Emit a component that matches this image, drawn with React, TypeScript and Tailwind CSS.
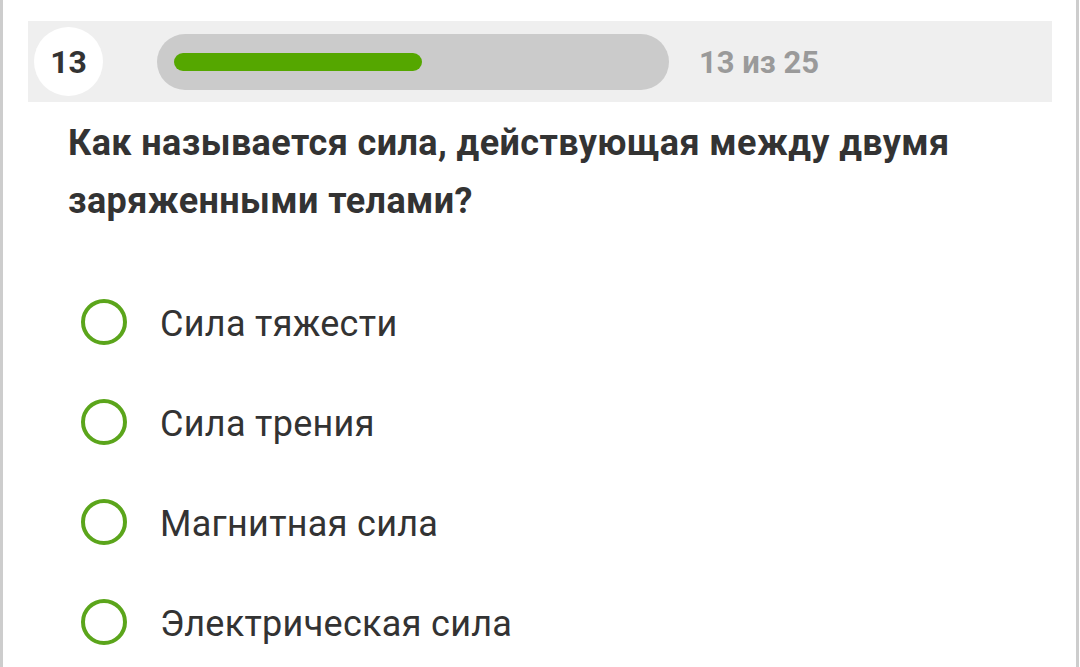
export default function App() {
  const options = ['Сила тяжести', 'Сила трения', 'Магнитная сила', 'Электрическая сила'];

  return (
    <div className="w-[1080px] h-[667px] overflow-hidden bg-white" style={{ fontFamily: 'Roboto, "Noto Sans", sans-serif' }}>
      <div className="w-[1079px] h-full border-l-[3px] border-r-[3px] border-[#cdcdcd] pt-[21px] pl-[25px]">
        {/* header */}
        <div className="w-[1024px] h-[81px] bg-[#efefef] flex items-center pl-[6px]">
          <div className="w-[69px] h-[69px] rounded-full bg-white flex items-center justify-center text-[32px] font-bold text-[#333]">
            13
          </div>
          <div className="ml-[54px] w-[512px] h-[56px] rounded-full bg-[#cbcbcb] flex items-center pl-[17px]">
            <div className="w-[248px] h-[18px] rounded-full bg-[#55a700]" />
          </div>
          <div className="ml-[30px] pt-[4px] text-[31px] font-bold text-[#9a9a9a]">13 из 25</div>
        </div>

        {/* question */}
        <div className="pl-[40px] pr-[60px] mt-[12px] text-[36px] leading-[58px] tracking-[0.4px] font-bold text-[#333]">
          Как называется сила, действующая между двумя заряженными телами?
        </div>

        {/* options */}
        <div className="mt-[42px] pl-[53px] flex flex-col">
          {options.map((o) => (
            <div key={o} className="h-[100px] flex items-center">
              <div className="w-[46px] h-[46px] rounded-full border-[4px] border-[#5ba51b]" />
              <span className="ml-[33px] pt-[4px] text-[36px] tracking-[0.3px] text-[#333]">{o}</span>
            </div>
          ))}
        </div>
      </div>
    </div>
  );
}
